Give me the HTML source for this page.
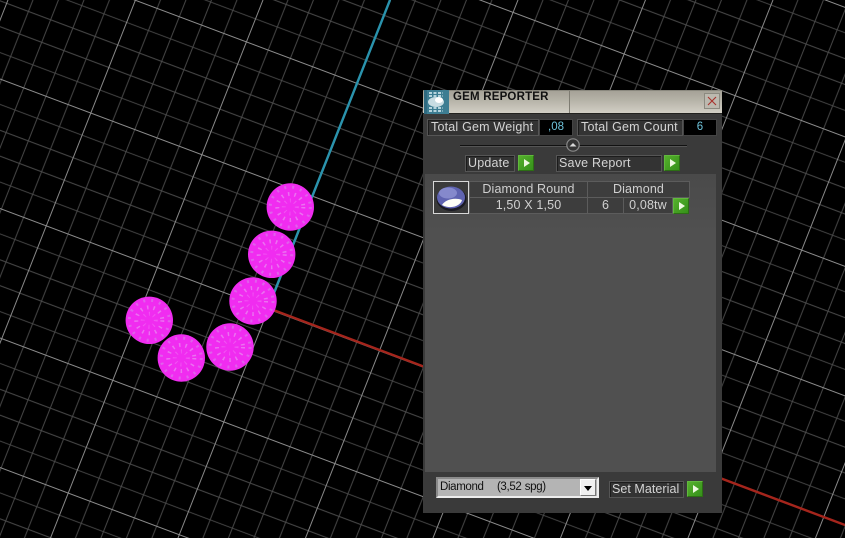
<!DOCTYPE html>
<html><head><meta charset="utf-8"><style>
html,body{margin:0;padding:0;background:#000;width:845px;height:538px;overflow:hidden}
body{position:relative;font-family:"Liberation Sans",sans-serif}
.a{position:absolute;box-sizing:border-box}
.t{position:absolute;box-sizing:border-box;color:#d4d4d4;font-size:12.5px;letter-spacing:.2px;line-height:15px;white-space:pre;border:1px solid #555;background:#333;box-shadow:inset 1px 1px 0 #1c1c1c}
.v{position:absolute;box-sizing:border-box;background:#000;border:1px solid #444;color:#6fc4dc;font-size:11.5px;line-height:15px;text-align:center}
.g{position:absolute;box-sizing:border-box;width:16px;height:16px;background:linear-gradient(135deg,#55b02c,#35901a);border:1px solid #62b83e;border-right-color:#2c6e14;border-bottom-color:#2c6e14}
.g:after{content:"";position:absolute;left:5px;top:3px;border-left:6px solid #eef8e0;border-top:4px solid transparent;border-bottom:4px solid transparent}
.c{position:absolute;box-sizing:border-box;border:1px solid #5c5c5c;background:#3d3d3d;color:#d0d0d0;font-size:12.5px;letter-spacing:.15px;line-height:15px;text-align:center;white-space:pre}
</style></head><body>
<svg class="a" style="left:0;top:0" width="845" height="538" viewBox="0 0 845 538">
<defs>
<pattern id="grid" width="127.5" height="129.5" patternUnits="userSpaceOnUse" patternTransform="matrix(.871 .3266 -.344 .871 268.1 308.5)">
<path d="M25.5 0V129.5M51 0V129.5M76.5 0V129.5M102 0V129.5M0 25.9H127.5M0 51.8H127.5M0 77.7H127.5M0 103.6H127.5" stroke="#4c4c4c" stroke-width="1" fill="none"/>
<path d="M.5 0V129.5M0 .5H127.5" stroke="#8c8c8c" stroke-width="1.1" fill="none"/>
</pattern>
<g id="gem">
<circle r="23.7" fill="#f02cf0"/>
<circle r="20" fill="none" stroke="#d878e8" stroke-width="3" stroke-dasharray="2 6" opacity=".7"/>
<circle r="13" fill="none" stroke="#e890f0" stroke-width="4" stroke-dasharray="1.5 5" opacity=".7"/>
<circle r="6.5" fill="none" stroke="#f070f4" stroke-width="4" stroke-dasharray="1 4" opacity=".6"/>
</g>
</defs>
<rect width="845" height="538" fill="url(#grid)"/>
<path d="M390 0L268 308" stroke="#2a93ad" stroke-width="2.4" fill="none"/>
<path d="M268 308L845 525" stroke="#a5251c" stroke-width="2.4" fill="none"/>
<use href="#gem" x="290.3" y="207"/>
<use href="#gem" x="271.7" y="254.3"/>
<use href="#gem" x="253" y="301"/>
<use href="#gem" x="230" y="347"/>
<use href="#gem" x="181.3" y="358"/>
<use href="#gem" x="149.3" y="320.3"/>
</svg>

<div class="a" style="left:423px;top:90px;width:299px;height:423px;background:#3a3a3a"></div>
<!-- title bar -->
<div class="a" style="left:423px;top:90px;width:299px;height:24px;background:linear-gradient(#a5a297,#b5b2a7 40%,#d2cfc5);border-top:1px solid #8a887e;border-bottom:1px solid #22221f"></div>
<div class="a" style="left:569px;top:91px;width:1px;height:22px;background:#7e7c72"></div>
<svg class="a" style="left:424px;top:90px" width="25" height="24" viewBox="0 0 25 24">
<rect width="25" height="24" fill="#3d7d92"/>
<rect x="0" y="0" width="3" height="24" fill="#2f6a80"/>
<path d="M5 3h14M5 6h14M5 18h14M5 21h14" stroke="#dff2f6" stroke-width="1.4" stroke-dasharray="3 1.5"/>
<ellipse cx="12" cy="12" rx="8" ry="5" fill="#c8dce2"/>
<ellipse cx="15" cy="10" rx="4" ry="3" fill="#fff"/>
</svg>
<div class="a" style="left:453px;top:90px;font-size:11.5px;font-weight:bold;color:#111;letter-spacing:.2px;line-height:14px;white-space:pre">GEM REPORTER</div>
<svg class="a" style="left:704px;top:93px" width="16" height="16" viewBox="0 0 16 16">
<rect x=".5" y=".5" width="15" height="15" fill="#bcb9af" stroke="#8c8a80"/>
<path d="M4 4L12 12M12 4L4 12" stroke="#a8322c" stroke-width="1.1"/>
</svg>

<!-- row 1 -->
<div class="t" style="left:427px;top:119px;width:112px;height:17px;padding-left:3px">Total Gem Weight</div>
<div class="v" style="left:539px;top:119px;width:34px;height:17px">,08</div>
<div class="t" style="left:577px;top:119px;width:106px;height:17px;padding-left:3px">Total Gem Count</div>
<div class="v" style="left:683px;top:119px;width:34px;height:17px">6</div>

<!-- slider -->
<div class="a" style="left:460px;top:145px;width:227px;height:1px;background:#111"></div>
<div class="a" style="left:460px;top:146px;width:227px;height:1px;background:#555"></div>
<svg class="a" style="left:566px;top:138px" width="14" height="14" viewBox="0 0 14 14">
<circle cx="7" cy="7" r="6.2" fill="#333" stroke="#8a8a8a" stroke-width="1.2"/>
<path d="M3.5 8.5L7 5L10.5 8.5Z" fill="#d8d8d8"/>
</svg>

<!-- buttons -->
<div class="t" style="left:465px;top:155px;width:50px;height:17px;padding-left:2px">Update</div>
<div class="g" style="left:518px;top:155px"></div>
<div class="t" style="left:556px;top:155px;width:106px;height:17px;padding-left:2px">Save Report</div>
<div class="g" style="left:664px;top:155px"></div>

<!-- inner panel -->
<div class="a" style="left:425px;top:174px;width:291px;height:298px;background:linear-gradient(#4a4a4a,#505050 20%,#505050)"></div>

<!-- table -->
<div class="a" style="left:433px;top:181px;width:36px;height:33px;background:#3a3a3a;border:1px solid #d8d8d8"></div>
<svg class="a" style="left:434px;top:182px" width="34" height="31" viewBox="0 0 34 31">
<ellipse cx="17.5" cy="17" rx="15" ry="12" fill="#1a1a22"/>
<ellipse cx="17" cy="15.5" rx="14" ry="11" fill="#5f63b0"/>
<ellipse cx="14" cy="11" rx="9" ry="5.5" fill="#8589cc"/>
<path d="M8 23C11 18 20 15 28 18C27 23 18 28 8 23Z" fill="#fdfdf6"/>
</svg>
<div class="c" style="left:469px;top:181px;width:119px;height:17px">Diamond Round</div>
<div class="c" style="left:587px;top:181px;width:103px;height:17px">Diamond</div>
<div class="c" style="left:469px;top:197px;width:119px;height:17px">1,50 X 1,50</div>
<div class="c" style="left:587px;top:197px;width:37px;height:17px">6</div>
<div class="c" style="left:623px;top:197px;width:50px;height:17px">0,08tw</div>
<div class="g" style="left:673px;top:198px"></div>

<!-- bottom -->
<div class="a" style="left:436px;top:477px;width:163px;height:21px;background:#b4b4b4;border:2px solid #ececec;border-top-color:#8a8a8a;border-left-color:#8a8a8a"></div>
<div class="a" style="left:440px;top:480px;font-size:11.5px;letter-spacing:-.35px;word-spacing:.5px;line-height:15px;color:#111;white-space:pre">Diamond    (3,52 spg)</div>
<div class="a" style="left:580px;top:479px;width:16px;height:17px;background:#f0f0f0;border:1px solid #fff;border-right-color:#777;border-bottom-color:#777"></div>
<div class="a" style="left:584px;top:486px;border-top:5px solid #000;border-left:4px solid transparent;border-right:4px solid transparent"></div>
<div class="t" style="left:609px;top:481px;width:75px;height:17px;padding-left:2px;letter-spacing:.05px">Set Material</div>
<div class="g" style="left:687px;top:481px"></div>
</body></html>
